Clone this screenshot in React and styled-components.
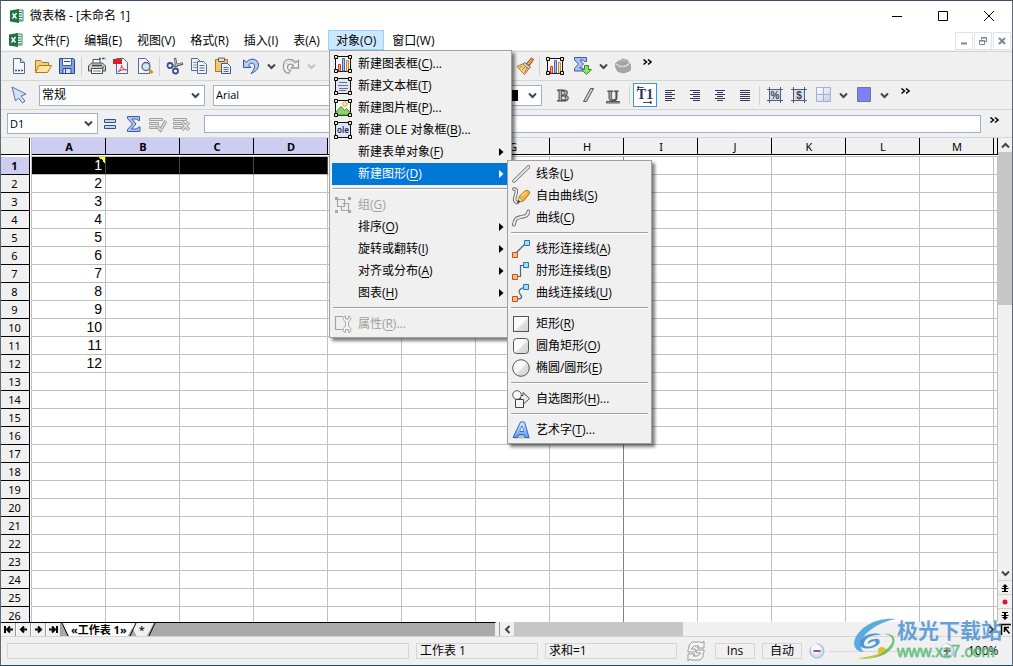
import React from 'react';
import styled, { createGlobalStyle, css } from 'styled-components';

const GlobalStyle = createGlobalStyle`
  *, *::before {
    box-sizing: border-box;
  }
  body {
    margin: 0;
    background: #f0f0f0;
    overflow: hidden;
  }
  button, input, select {
    font: inherit;
    color: inherit;
    margin: 0;
    padding: 0;
    border-radius: 0;
  }
  svg {
    display: block;
    flex: none;
  }
`

const Window = styled.div`
  display: flex;
  flex-direction: column;
  height: 100vh;
  position: relative;
  border: 1px solid #5d6a78;
  border-top-color: #3d4a66;
  border-bottom-color: #1b4f63;
  background: #f0f0f0;
  color: #000;
  font: 12px/16px "Open Sans", "Noto Sans CJK SC", sans-serif;
`

/* title bar and menu bar */

const TitleBar = styled.header`
  display: flex;
  align-items: center;
  height: 29px;
  padding: 0 0 0 8px;
  background: #fff;
`

const Title = styled.h1`
  flex: 1;
  margin: 0 0 0 5px;
  font-size: 12px;
  font-weight: 400;
`

const CaptionButton = styled.button`
  display: flex;
  align-items: center;
  justify-content: center;
  width: 46px;
  height: 28px;
  border: 0;
  background: none;
`

const MenuBar = styled.nav`
  display: flex;
  align-items: center;
  gap: 1px;
  height: 21px;
  padding: 0 1px 0 7px;
  background: #fff;
  border-bottom: 1px solid #f0f0f0;
`

const MenuSlot = styled.div`
  position: relative;
`

const MenuTitle = styled.button`
  height: 20px;
  padding: 1px ${props => props.$open ? '7px' : '6px'} 0;
  border: 1px solid ${props => props.$open ? '#99d1ff' : 'transparent'};
  background: ${props => props.$open ? '#cce8ff' : 'none'};
  line-height: 16px;
  white-space: nowrap;
`

const ChildButtons = styled.div`
  display: flex;
  gap: 1px;
  margin-left: auto;
  padding-top: 2px;
`

const ChildButton = styled.button`
  display: flex;
  align-items: center;
  justify-content: center;
  width: 18px;
  height: 18px;
  border: 1px solid #e3e3e3;
  background: #fff;
`

/* popup menus */

const Popup = styled.ul`
  position: absolute;
  z-index: 10;
  top: ${props => props.$sub ? '-3px' : '100%'};
  left: ${props => props.$sub ? 'calc(100% - 2px)' : '1px'};
  width: ${props => props.$sub ? '145px' : '183px'};
  margin: 0;
  padding: 2px;
  list-style: none;
  border: 1px solid #a0a0a0;
  background: #f0f0f0;
  box-shadow: 3px 3px 3px rgba(0, 0, 0, 0.5);
  color: #000;
`

const Entry = styled.li`
  position: relative;
  height: 22px;
  background: ${props => props.$active ? '#0078d7' : 'none'};
  color: ${props => props.$active ? '#fff' : '#000'};
`

const EntryButton = styled.button`
  display: grid;
  grid-template-columns: 26px 1fr 8px;
  align-items: center;
  width: 100%;
  height: 22px;
  padding: 0 2px 0 0;
  border: 0;
  background: none;
  text-align: left;
  white-space: nowrap;
  &:disabled {
    color: #a0a0a0;
  }
  > svg:first-child {
    margin-left: 2px;
  }
`

const EntryText = styled.span`
  grid-column: 2;
`

const Key = styled.span`
  text-decoration: underline;
  text-underline-offset: 2px;
`

const Divider = styled.li`
  height: 9px;
  padding: 3px 1px 0;
  &::before {
    content: "";
    display: block;
    height: 2px;
    background: #a0a0a0;
    border-bottom: 1px solid #fff;
  }
`

/* toolbars */

const ToolBar = styled.div`
  display: flex;
  align-items: center;
  height: ${props => props.$height || '29px'};
  padding-left: 6px;
  border-top: 1px solid #d5d5d5;
`

const Tool = styled.button`
  display: flex;
  align-items: center;
  justify-content: center;
  flex: none;
  width: ${props => props.$wide ? '25px' : '24px'};
  height: 24px;
  border: 1px solid ${props => props.$on ? '#3c96dc' : 'transparent'};
  background: ${props => props.$on ? '#fff' : 'none'};
`

const DropTool = styled(Tool)`
  width: 16px;
  color: ${props => props.$off ? '#c4c4c4' : '#444'};
`

const ToolLine = styled.span`
  flex: none;
  width: 6px;
  height: 19px;
  background: linear-gradient(#d0d0d0, #d0d0d0) 2px 0 / 1px 100% no-repeat;
`

const Space = styled.span`
  flex: none;
  width: ${props => props.$w};
`

const More = styled.button`
  align-self: flex-start;
  width: 16px;
  height: 20px;
  border: 0;
  background: none;
  display: flex;
  align-items: center;
  justify-content: center;
`

const SelectFrame = styled.label`
  display: grid;
  flex: none;
  align-items: center;
  width: ${props => props.$w};
  height: 21px;
  border: 1px solid #9ab2cf;
  background: #fff;
  color: #444;
  > * {
    grid-area: 1 / 1;
  }
  > svg {
    justify-self: end;
    margin-right: 4px;
    pointer-events: none;
  }
`

const Select = styled.select`
  appearance: none;
  width: 100%;
  height: 19px;
  padding: 0 16px 0 2px;
  border: 0;
  background: transparent;
  color: #000;
  font-size: ${props => props.$small ? '11px' : '12px'};
`

const Swatch = styled.span`
  width: 26px;
  height: 11px;
  margin-left: 4px;
  background: #000;
`

const FormulaInput = styled.input`
  flex: 1;
  min-width: 0;
  height: 18px;
  margin-left: 10px;
  border: 1px solid #9ab2cf;
  background: #fff;
`

/* spreadsheet */

const Sheet = styled.main`
  display: flex;
  flex: 1;
  min-height: 0;
  border-top: 1px solid #d5d5d5;
`

const GridArea = styled.div`
  flex: 1;
  min-width: 0;
  overflow: hidden;
  background: #fff;
`

const Grid = styled.table`
  width: 100%;
  table-layout: fixed;
  border-collapse: separate;
  border-spacing: 0;
`

const headFont = css`
  padding: 0;
  text-align: center;
  font-family: "Noto Sans", "DejaVu Sans", sans-serif;
  font-size: 11px;
  font-weight: ${props => props.$on ? 700 : 400};
  background: ${props => props.$on ? '#cdcdf2' : '#f0f0f0'};
`

const ColHead = styled.th`
  ${headFont}
  height: 19px;
  padding: 0 0 2px;
  line-height: 16px;
  box-shadow: inset 0 -1px #c0c0c0, inset 0 -2px #fff, inset 0 -3px #000, inset -1px 0 #000;
`

const Corner = styled.td`
  height: 19px;
  padding: 0;
  background: #f0f0f0;
  box-shadow: inset -1px 0 #c0c0c0, inset -2px 0 #fff, inset -3px 0 #000, inset 0 -2px #fff, inset 0 -3px #000;
`

const RowHead = styled.th`
  ${headFont}
  height: 18px;
  padding: 1px 4px 1px 0;
  line-height: 16px;
  box-shadow: inset -1px 0 #c0c0c0, inset -2px 0 #fff, inset -3px 0 #000, inset 0 -1px #000;
`

const Cell = styled.td`
  height: 18px;
  padding: 0 3px 0 0;
  text-align: right;
  font: 14px/17px "Liberation Sans", sans-serif;
  color: ${props => props.$selected ? '#fff' : '#000'};
  background: ${props => props.$selected ? '#000' : '#fff'};
  border-right: 1px solid ${props => props.$selected ? '#484848' : props.$pageEdge ? '#808080' : '#c0c0c0'};
  border-bottom: 1px solid #c0c0c0;
  ${props => props.$note && css`
    background: linear-gradient(45deg, transparent 50%, #ff0 50%) top right / 6px 6px no-repeat, #000;
  `}
`

const VScroll = styled.div`
  display: flex;
  flex-direction: column;
  width: 14px;
  background: #f0f0f0;
`

const ScrollButton = styled.button`
  display: flex;
  align-items: center;
  justify-content: center;
  flex: none;
  width: 14px;
  height: 14px;
  border: 0;
  border-top: ${props => props.$line ? '1px solid #d0d0d0' : '0'};
  background: #f0f0f0;
  color: #444;
`

const Track = styled.div`
  display: flex;
  flex-direction: ${props => props.$vertical ? 'column' : 'row'};
  flex: 1;
  background: #f0f0f0;
  &::before {
    content: "";
    flex: 0 0 ${props => props.$thumb};
    background: #c6c6c6;
  }
`

const BottomRow = styled.div`
  display: flex;
  height: 14px;
`

const TabStrip = styled.div`
  display: flex;
  width: 49%;
  border-top: 1px solid #000;
  border-right: 1px solid #f0f0f0;
  background: #aaa;
`

const NavButton = styled.button`
  display: flex;
  align-items: center;
  justify-content: center;
  width: 15px;
  height: 13px;
  border: 0;
  border-right: 1px solid #999;
  border-left: 1px solid #fff;
  background: #f0f0f0;
`

const SheetTab = styled.button`
  height: 13px;
  margin-right: -6px;
  border: 0;
  padding: ${props => props.$current ? '0 8px 0 9px' : '0 9px'};
  clip-path: polygon(0 0, 100% 0, calc(100% - 7px) 100%, 7px 100%);
  background: ${props => props.$current ? '#fff' : '#f0f0f0'};
  font-family: "Noto Sans", "Noto Sans CJK SC", sans-serif;
  font-size: 11px;
  line-height: 12px;
  font-weight: ${props => props.$current ? 700 : 400};
  white-space: nowrap;
`

const Splitter = styled.span`
  width: 4px;
  background: #f0f0f0;
  border-right: 1px solid #999;
`

/* status bar */

const StatusBar = styled.footer`
  display: flex;
  align-items: center;
  height: 29px;
  gap: 7px;
  padding: 0 12px 0 6px;
  border-top: 1px solid #d5d5d5;
`

const StatusField = styled.span`
  flex: ${props => props.$w ? `0 0 ${props.$w}` : '1'};
  height: 16px;
  padding-left: ${props => props.$center ? '0' : '3px'};
  border: 1px solid #d5d5d5;
  line-height: 14px;
  white-space: nowrap;
  text-align: ${props => props.$center ? 'center' : 'left'};
`

const RefreshButton = styled.button`
  width: 24px;
  height: 22px;
  padding: 0 2px;
  border: 0;
  background: none;
`

const Zoom = styled.div`
  display: flex;
  align-items: center;
  width: 191px;
`

const RoundButton = styled.button`
  width: 16px;
  height: 18px;
  border: 0;
  background: none;
`

const ZoomRange = styled.input`
  appearance: none;
  flex: 1;
  min-width: 0;
  height: 16px;
  margin: 0 2px 0 4px;
  background: linear-gradient(#d8d8d8, #d8d8d8) 0 50% / 100% 1px no-repeat;
  &::-webkit-slider-thumb {
    appearance: none;
    width: 8px;
    height: 8px;
    border-radius: 4px;
    background: #e4bd2e;
  }
`

const Percent = styled.output`
  width: 32px;
  margin-left: 13px;
`

const Watermark = styled.aside`
  position: absolute;
  z-index: 5;
  right: 10px;
  bottom: 4px;
  display: flex;
  align-items: center;
  pointer-events: none;
`

const BrandText = styled.div`
  padding-bottom: 1px;
  color: rgba(57, 135, 205, 0.75);
  font: 700 21px/26px "Noto Sans CJK SC", sans-serif;
`

const BrandLink = styled.div`
  color: rgba(84, 184, 115, 0.8);
  font: 400 16px/18px "Liberation Sans", sans-serif;
  -webkit-text-stroke: 1px rgba(84, 184, 115, 0.5);
`

/* icons */

const Svg = ({ size = 18, children }) => (
  <svg width={size} height={size} viewBox="0 0 18 18" fill="none" aria-hidden="true">{children}</svg>
)

const Chevron = ({ turn = 0, size = 9 }) => (
  <svg width={size} height={size} viewBox="0 0 9 9" fill="none" aria-hidden="true">
    <path d="M1 2.5 4.5 6 8 2.5" stroke="currentColor" strokeWidth="2" transform={`rotate(${turn} 4.5 4.5)`} />
  </svg>
)

const DoubleChevron = () => (
  <svg width="9" height="7" viewBox="0 0 9 7" fill="none" aria-hidden="true">
    <path d="M.5.5 3.5 3 .5 5.5M5 .5 8 3 5 5.5" stroke="#000" strokeWidth="1.5" />
  </svg>
)

const Arrow = () => (
  <svg width="5" height="8" viewBox="0 0 5 8" aria-hidden="true"><path d="M0 0v8l4.5-4z" fill="currentColor" /></svg>
)

const SheetLogo = () => (
  <svg width="16" height="16" viewBox="0 0 16 16" aria-hidden="true">
    <path d="M8 2h6v11H8z" fill="#e8f4ec" stroke="#3b8760" />
    <path d="M10 4.5h3M10 7h3M10 9.500h3M10 12h3" stroke="#3b8760" />
    <path d="M1 2.500 10 1v14l-9-1.500z" fill="#217346" />
    <path d="m3.500 5.500 4 5M7.500 5 3.500 10.500" stroke="#fff" strokeWidth="1.400" />
  </svg>
)

const handles = [[0, 0], [14, 0], [0, 14], [14, 14]]

const FrameIcon = ({ children, fill = '#f7f7fb' }) => (
  <Svg>
    <path d="M1.500 1.500h15v15h-15z" fill={fill} stroke="#111" />
    {children}
    {handles.map(([x, y]) => <path key={`${x}-${y}`} d={`M${x + 0.5} ${y + 0.5}h3v3h-3z`} fill="#ffe79a" stroke="#000" />)}
  </Svg>
)

const ChartFrame = () => (
  <FrameIcon>
    <path d="M4.500 9.500h2V16h-2z" fill="#f7a3a3" stroke="#c43c3c" />
    <path d="M8.500 3.500h2V16h-2z" fill="#a9c4f2" stroke="#4667b0" />
    <path d="M12.500 5.500h2V16h-2z" fill="#ffe2a6" stroke="#bd8a35" />
  </FrameIcon>
)

const TextFrame = () => (
  <FrameIcon fill="#dfe6f5">
    <path d="M5 5.500h8M4 8.500h10M5 11.500h9M5 13.500h7" stroke="#66718c" />
  </FrameIcon>
)

const PictureFrame = () => (
  <FrameIcon fill="#f4f8ee">
    <circle cx="11" cy="5" r="2.200" fill="#fff1a8" stroke="#e4a032" />
    <path d="m2 13 5-5.500 3.500 4 2-2 3.500 3.500v3H2z" fill="#8fd06b" stroke="#3e8b2c" />
  </FrameIcon>
)

const OleFrame = () => (
  <FrameIcon fill="#dbe3f5">
    <text x="9" y="12" textAnchor="middle" fontSize="8" fontWeight="600" fontFamily="Noto Sans, sans-serif" fill="#1d2c50">ole</text>
  </FrameIcon>
)

const GroupIcon = () => (
  <Svg>
    <path d="M3.500 3.500h7v7h-7zM8.500 7.500h6v7h-7v-4" stroke="#a5a5a5" strokeWidth="1.200" />
    <path d="M1 1h3v3H1zM14 1h3v3h-3zM1 14h3v3H1zM14 14h3v3h-3z" fill="#a5a5a5" />
  </Svg>
)

const PropertyIcon = () => (
  <Svg>
    <path d="M9 1.500H1.500v13H9" stroke="#a5a5a5" strokeWidth="1.200" />
    <path
      d="M10 1.500c-1.500 2-1 4 1.500 5v5c-2.500 1-3 3.500-1.500 5.500l1.500.500v-3h3v3l1.500-.500c1.500-2 1-4.500-1.500-5.500v-5c2.500-1 3-3 1.500-5l-1.500-.500v3h-3V1z"
      fill="#f6f6f6"
      stroke="#a5a5a5"
    />
  </Svg>
)

const LineIcon = () => (
  <Svg>
    <path d="M2 16 16.500 2" stroke="#777" strokeWidth="3.600" strokeLinecap="round" />
    <path d="M2 16 16.500 2" stroke="#e8e8e8" strokeWidth="1.800" strokeLinecap="round" />
  </Svg>
)

const FreehandIcon = () => (
  <Svg>
    <path d="M1.800 2c4 0 2.500 4 1.500 7s-1.500 5.500 2 6.500" stroke="#666" strokeWidth="3.400" strokeLinecap="round" />
    <path d="M1.800 2c4 0 2.500 4 1.500 7s-1.500 5.500 2 6.500" stroke="#f2f2f2" strokeWidth="1.600" strokeLinecap="round" />
    <path d="m6 15.500 2-7L13.500 3.500q4-1 4 3L12 13.500z" fill="#f5b83c" stroke="#a86c10" />
    <path d="m9 9 5-4" stroke="#ffe08c" strokeWidth="1.500" />
    <path d="m5.500 16 1.500-6 4 3.500z" fill="#f6ddb0" stroke="#a86c10" strokeWidth=".6" />
    <path d="m5.500 16 .800-3 2 1.500z" fill="#3d2d14" />
  </Svg>
)

const CurveIcon = () => (
  <Svg>
    <path d="M2 15.500C3 9 5 9 9 8s6 0 7.500-5.500" stroke="#666" strokeWidth="3.800" strokeLinecap="round" />
    <path d="M2 15.500C3 9 5 9 9 8s6 0 7.500-5.500" stroke="#eee" strokeWidth="2" strokeLinecap="round" />
  </Svg>
)

const connectorPaths = {
  line: 'm4 13 10-10',
  elbow: 'M4 14.500h4.500V3.500H14',
  curve: 'M5 15c6 0 5-3 3-5s-1-6 5-6.500',
}

const Connector = ({ kind }) => (
  <Svg>
    <path d={connectorPaths[kind]} stroke="#4d6680" strokeWidth="1.200" />
    <path d="M.500 12.500h5v5h-5z" fill="#ffb98a" stroke="#c5521b" />
    <path d={kind === 'line' ? 'M12.500.500h5v5h-5z' : 'M11.500.500h5v5h-5z'} fill="#a5dcf7" stroke="#2476ad" />
  </Svg>
)

const ShapeIcon = ({ r }) => (
  <Svg>
    <defs>
      <linearGradient id="shapeFill" x1="0" y1="0" x2="1" y2="1">
        <stop offset=".5" stopColor="#fafafa" />
        <stop offset=".55" stopColor="#e2e2e2" />
        <stop offset="1" stopColor="#cfcfcf" />
      </linearGradient>
    </defs>
    {r === 9
      ? <circle cx="9" cy="9" r="8.300" fill="url(#shapeFill)" stroke="#555" />
      : <rect x="1.500" y="1.500" width="15" height="15" rx={r} fill="url(#shapeFill)" stroke="#555" />}
  </Svg>
)

const AutoShapeIcon = () => (
  <Svg>
    <path d="M8.500 5.500h2.500V2.500l6.500 6-6.500 6v-3h-2.500z" fill="#e8e8e8" stroke="#444" />
    <circle cx="5" cy="5" r="4.300" fill="#fafafa" stroke="#555" />
    <path d="M3.500 9.500h8v8h-8z" fill="#f5f5f5" stroke="#444" />
  </Svg>
)

const ArtIcon = () => (
  <Svg>
    <defs>
      <linearGradient id="artFill" x1="0" y1="0" x2="0" y2="1">
        <stop offset="0" stopColor="#d5ecff" />
        <stop offset="1" stopColor="#5a9af0" />
      </linearGradient>
    </defs>
    <path d="M3 17.500h15L13 3z" fill="#999" opacity=".6" />
    <path
      d="M8.500 1h4l4.500 15.500h-4l-.800-3H7l-1.500 3H1zM10 5l-2 5.500h3.500z"
      fillRule="evenodd"
      fill="url(#artFill)"
      stroke="#3a68b8"
      strokeLinejoin="round"
    />
    <path d="m10 5.500-1.800 4.500h3z" fill="#f0f0f0" />
  </Svg>
)

const NewIcon = () => (
  <Svg>
    <path d="M3.500 1.500h7l4 4v11h-11z" fill="#f4f7fd" stroke="#53698f" />
    <path d="M10.500 1.500v4h4" fill="#cfdaf0" stroke="#53698f" />
    <path d="M5 13.500h2M8 13.500h2M11 13.500h2" stroke="#35507d" strokeWidth="1.500" />
  </Svg>
)

const OpenIcon = () => (
  <Svg>
    <path d="M1.500 14.500v-11h5l2 2h6v3" fill="#f3cf73" stroke="#a87a1e" />
    <path d="m1.500 15.500 3.500-7h12.500l-4 7z" fill="#ffe7a3" stroke="#a87a1e" />
  </Svg>
)

const SaveIcon = () => (
  <Svg>
    <path d="M1.500 1.500h14l1 1v14h-15z" fill="#7fa3e6" stroke="#28498f" />
    <path d="M4.500 1.500h9v7h-9z" fill="#f4f7fd" stroke="#3a5ea8" />
    <path d="M5 11.500h8v5H5z" fill="#dce6f8" stroke="#28498f" />
    <path d="M7.500 12v4M6 4.500h6" stroke="#28498f" />
  </Svg>
)

const PrintIcon = () => (
  <Svg>
    <path d="M5 6V2.500h7V6" fill="#fff" stroke="#555" />
    <path d="m.500 9 3-3h11l3 3v5H.500z" fill="#c9ccd2" stroke="#4b4b4b" />
    <path d="M4 8.500h10" stroke="#444" strokeWidth="1.500" />
    <path d="M3.500 11.500h11v5h-11z" fill="#fff" stroke="#4b4b4b" />
    <path d="M5 14h8" stroke="#777" />
    <path d="M14 10.500h2" stroke="#2ca02c" strokeWidth="2" />
    <path d="M11 1.500h2M14 1.500h2M16.500 1.500h1" stroke="#3d4e7d" strokeWidth="1.500" />
  </Svg>
)

const PdfIcon = () => (
  <Svg>
    <path d="M4.500 1.500h7l4 4v11h-11z" fill="#eef2fa" stroke="#53698f" />
    <path d="M1 2h9v5H1z" fill="#df2020" />
    <path d="M6 15c2-2 4-5 3.500-7 0 3 3 5 5 5-3-1-6 0-8.500 2z" fill="#fff" stroke="#d93232" />
  </Svg>
)

const PreviewIcon = () => (
  <Svg>
    <path d="M2.500 1.500h7l4 4v11h-11z" fill="#f4f7fd" stroke="#53698f" />
    <circle cx="10" cy="9.500" r="4" fill="#cfe6f6" stroke="#55657d" strokeWidth="1.300" />
    <path d="m13 12.500 3.500 3.500" stroke="#d8901d" strokeWidth="2.600" />
  </Svg>
)

const CutIcon = () => (
  <Svg>
    <path d="m9 1 1.500 9M17 6.500 7.500 9" stroke="#555" strokeWidth="2.400" />
    <path d="m9 2 1.500 7M16 6.500 8 8.500" stroke="#e0e0e0" strokeWidth=".8" />
    <circle cx="4" cy="8.500" r="2.500" fill="#fff" stroke="#35508c" strokeWidth="1.800" />
    <circle cx="9.500" cy="14" r="2.500" fill="#fff" stroke="#35508c" strokeWidth="1.800" />
  </Svg>
)

const CopyIcon = () => (
  <Svg>
    <path d="M1.500 1.500h6l3 3v9h-9z" fill="#f0f4fc" stroke="#53698f" />
    <path d="M3 5.500h4M3 8h4M3 10.500h4" stroke="#7f93bb" />
    <path d="M7.500 4.500h6l3 3v9h-9z" fill="#f0f4fc" stroke="#53698f" />
    <path d="M9.500 8.500h5M9.500 11h5M9.500 13.500h5" stroke="#53698f" />
  </Svg>
)

const PasteIcon = () => (
  <Svg>
    <path d="M1.500 2.500h12v12h-12z" fill="#f3c867" stroke="#a97a22" />
    <path d="M4.500 1h6v3.500h-6z" fill="#d9dde4" stroke="#666" />
    <path d="M7.500 6.500h6l3 3v7h-9z" fill="#f0f4fc" stroke="#42598b" />
    <path d="M9.500 10.500h5M9.500 12.500h5M9.500 14.500h5" stroke="#53698f" />
  </Svg>
)

const UndoIcon = () => (
  <Svg>
    <path
      d="M1.500 3v7.500H9L6.500 8c3-3 6.500-2 6 2-.200 2-1.500 4-3.500 6.500 4-1.500 7.500-4.500 7.500-8.500 0-6-7.500-8-12-3z"
      fill="#b5ccf5"
      stroke="#34579c"
    />
  </Svg>
)

const RedoIcon = () => (
  <Svg>
    <path
      d="M16.500 3.500v7.500h-7l2-2.500c-2-2.500-6-1.500-6 1.500 0 2 1.500 3.500 3 3.500l-2 3C3 15.500 1 12.500 1.500 8c1-6.500 8.500-7.500 12-2.500z"
      fill="#f4f4f4"
      stroke="#999"
      strokeWidth="1.300"
    />
    <path d="M4 7.500c1-4 6-4.500 9-.500" stroke="#b5b5b5" strokeDasharray="2 1" />
  </Svg>
)

const LockIcon = () => (
  <Svg><path d="M5 8V6a4 4 0 0 1 8 0v2M3.500 8.500h11v7h-11z" fill="#ddd" stroke="#777" /></Svg>
)

const BrushIcon = () => (
  <Svg>
    <path d="m10.500 6.500 5-5.500 2 1.500-4 6z" fill="#e8a957" stroke="#75471b" />
    <path d="m8.500 5.500 6 4.500-2 2-6-4.500z" fill="#d5d5d5" stroke="#666" />
    <path d="M6.500 7 1 9.500l7.500 8 4-5.500z" fill="#ffdc8f" stroke="#a66e20" />
    <path d="m3.500 10.500 3-1M6 13l3-3M8.500 15.500l2-4" stroke="#a66e20" />
  </Svg>
)

const SigmaIcon = ({ plus }) => (
  <Svg>
    <path
      d={plus ? 'M.500.500h12v4h-2l-1-1.500H6l3.500 4-4 4H9v3H.500v-2.500l4-4.500-4-4z' : 'M2.500 1.500h12v4H13l-1-1.500H7l4 5-4.500 5H12l1.500-2H15v4.500H2.500v-2l5-5.500-5-5.500z'}
      fill="#a9c2f2"
      stroke="#3d5ba3"
    />
    {plus && <path d="M10.500 8.500h4v4h3l-5 5-5-5h3z" fill="#8be06a" stroke="#3b8a2a" />}
  </Svg>
)

const CubeIcon = () => (
  <Svg>
    <path d="M1 6.500 4 4l5-2.500L14 3l1 3 2 1v6c-4 4-11 4-14 1l-2-4z" fill="#a3a3a3" />
    <path d="M2 7c4 3.500 10 3.500 13-.500" stroke="#dadada" strokeWidth="1.300" />
    <path d="m5 5 4-2 4 1.500" stroke="#bdbdbd" />
  </Svg>
)

const PointerIcon = () => (
  <Svg><path d="m2 1 3.500 14 3-3 4 5 2.500-2-4-5 5-2z" fill="#d5e0f6" stroke="#5a70a0" /></Svg>
)

const LetterIcon = ({ letter }) => (
  <Svg>
    {letter === 'I'
      ? <path d="M11.500 2.500h3L7.500 15.500h-3z" fill="#ccc" stroke="#555" />
      : (
        <text x="9" y="15" textAnchor="middle" fontSize={letter === 'U' ? 15 : 17} fontWeight="700" fontFamily="Liberation Serif, serif" fill="#bbb" stroke="#505050">
          {letter}
        </text>
      )}
    {letter === 'U' && <path d="M2.500 15.500h13v1.500h-13z" fill="#bbb" stroke="#555" />}
  </Svg>
)

const TextDirection = () => (
  <Svg>
    <text x="9" y="13" textAnchor="middle" fontSize="14" fontWeight="700" fontFamily="Liberation Serif, serif" fill="#2e3260">T1</text>
    <path d="M1.500 1.500h6M3 0 1 1.500l2 1.500M7 16.500h8M14 15l2 1.500-2 1.500" stroke="#3b4070" />
  </Svg>
)

const alignRows = {
  left: [10, 7, 10, 7, 10, 7],
  right: [10, 7, 10, 7, 10, 7],
  center: [10, 6, 10, 6, 10, 6],
  justify: [10, 10, 10, 10, 10, 10],
}

const AlignIcon = ({ kind }) => (
  <Svg>
    {alignRows[kind].map((w, i) => {
      const x = kind === 'right' ? 14 - w : kind === 'center' ? 9 - w / 2 : 4
      return <path key={i} d={`M${x} ${4.5 + i * 2}h${w}`} stroke="#35355e" />
    })}
  </Svg>
)

const NumberIcon = ({ sign }) => (
  <Svg>
    <path d="M4 4h10v10H4z" fill="#d5def2" />
    <path d="M1 3.500h16M1 14.500h16M3.500 1v16M14.500 1v16" stroke="#4e5c7d" />
    <text x="9" y="13" textAnchor="middle" fontSize="10" fontWeight="700" fontFamily="Liberation Sans, sans-serif" fill="#444">{sign}</text>
  </Svg>
)

const BorderIcon = () => (
  <Svg>
    <defs>
      <linearGradient id="borderFill" x1="0" y1="0" x2="1" y2="1">
        <stop offset="0" stopColor="#fff" />
        <stop offset="1" stopColor="#c3cde6" />
      </linearGradient>
    </defs>
    <path d="M2.500 1.500h14v14h-14z" fill="url(#borderFill)" stroke="#a3afd0" />
    <path d="M9.500 2v13M3 8.500h13" stroke="#a3afd0" />
  </Svg>
)

const FillIcon = () => <Svg><path d="M2.500 1.500h13v14h-13z" fill="#8080ff" stroke="#777" /></Svg>

const EqualIcon = () => (
  <Svg><path d="M3.500 4.500h11v3h-11zM3.500 10.500h11v3h-11z" fill="#c6d4ef" stroke="#34508f" /></Svg>
)

const AcceptIcon = ({ cancel }) => (
  <Svg>
    <path d="M.500 3.500h13v2H.500zM.500 7.500h9v2h-9zM.500 11.500h8v2h-8z" fill="#e8e8e8" stroke="#a0a0a0" />
    {cancel
      ? <path d="m9 7 7 8M16 7l-7 8" stroke="#999" strokeWidth="3.400" />
      : <path d="m8 11 3.500 4L17 6" stroke="#999" strokeWidth="3.400" />}
    {cancel
      ? <path d="m9 7 7 8M16 7l-7 8" stroke="#e4e4e4" strokeWidth="1.300" />
      : <path d="m8 11 3.500 4L17 6" stroke="#e4e4e4" strokeWidth="1.300" />}
  </Svg>
)

const navPaths = [
  'M2 2v7M10 5.500H4M7 2.500l-3 3 3 3',
  'M9 5.500H3M6 2.500l-3 3 3 3',
  'M2 5.500h6M5 2.500l3 3-3 3',
  'M9 2v7M1 5.500h6M4 2.500l3 3-3 3',
]

const NavIcon = ({ d }) => (
  <svg width="11" height="11" viewBox="0 0 11 11" fill="none" aria-hidden="true"><path d={d} stroke="#000" strokeWidth="2" /></svg>
)

const TabEdge = styled.svg`
  position: relative;
  z-index: 1;
  margin: 0 -7px 0 0;
`

const Slant = ({ back }) => (
  <TabEdge width="8" height="13" viewBox="0 0 8 13" fill="none" aria-hidden="true">
    <path d={back ? 'M7 0 1 13' : 'M1 0l6 13'} stroke="#000" />
  </TabEdge>
)

const PageJump = ({ down }) => (
  <svg width="8" height="8" viewBox="0 0 8 8" aria-hidden="true">
    <path d="m4 0 3 3H5v1h2.500v1H5v2h2v1H1V7h2V5H.500V4H3V3H1z" fill="#000" transform={down ? 'rotate(180 4 4)' : undefined} />
  </svg>
)

const SyncIcon = () => (
  <svg width="20" height="20" viewBox="0 0 20 20" aria-hidden="true">
    <path d="M3 7V4l3-3h9l1 1 2-2v7h-7l2-2H8L5 8h4l1 2-2 1H2V9zM17 13v3l-3 3H5l-1-1-2 2v-7h7l-2 2h5l3-3h-4l-1-2 2-1h6v2z" fill="#f6f6f6" stroke="#9a9a9a" />
  </svg>
)

const RoundIcon = ({ plus }) => (
  <svg width="16" height="16" viewBox="0 0 16 16" fill="none" aria-hidden="true">
    <circle cx="8" cy="8" r="7" fill="#cfe2f3" stroke="#93b3cf" />
    <circle cx="7" cy="6" r="5" fill="#f3f9fe" />
    <path d={plus ? 'M4.500 8h7M8 4.500v7' : 'M4.500 8h7'} stroke="#8b1c2c" strokeWidth="1.500" />
  </svg>
)

const BrandMark = () => (
  <svg width="44" height="42" viewBox="0 0 44 42" aria-hidden="true">
    <path d="M43 1C25-1 7 8 2 21c-3 8 2 13 9 13-6-5-3-14 4-20C22 8 31 3 43 1z" fill="#4aa3dd" opacity=".9" />
    <path d="M31 16c9 1 11 7 5 13C29 36 18 39 6 40c16 2 31-3 35-14 2-7-2-11-10-10z" fill="#63bd68" opacity=".9" />
    <path d="M29 17c-9-4-22 1-22 9 0 6 13 6 19 0 2-3 0-6-4-5-5 0-8 3-7 5 3-3 8-4 8-1-2 4-12 5-12 1 0-6 9-10 18-9z" fill="#3f8ed0" opacity=".9" />
    <path d="M3 41c14-1 26-5 31-12-4 9-18 13-31 12z" fill="#efc22e" opacity=".9" />
  </svg>
)

/* data */

const objectMenu = [
  { text: '新建图表框', k: 'C', dots: true, icon: <ChartFrame /> },
  { text: '新建文本框', k: 'T', icon: <TextFrame /> },
  { text: '新建图片框', k: 'P', dots: true, icon: <PictureFrame /> },
  { text: '新建 OLE 对象框', k: 'B', dots: true, icon: <OleFrame /> },
  { text: '新建表单对象', k: 'F', arrow: true },
  { text: '新建图形', k: 'D', arrow: true, active: true },
  null,
  { text: '组', k: 'G', disabled: true, icon: <GroupIcon /> },
  { text: '排序', k: 'O', arrow: true },
  { text: '旋转或翻转', k: 'I', arrow: true },
  { text: '对齐或分布', k: 'A', arrow: true },
  { text: '图表', k: 'H', arrow: true },
  null,
  { text: '属性', k: 'R', dots: true, disabled: true, icon: <PropertyIcon /> },
]

const shapeMenu = [
  { text: '线条', k: 'L', icon: <LineIcon /> },
  { text: '自由曲线', k: 'S', icon: <FreehandIcon /> },
  { text: '曲线', k: 'C', icon: <CurveIcon /> },
  null,
  { text: '线形连接线', k: 'A', icon: <Connector kind="line" /> },
  { text: '肘形连接线', k: 'B', icon: <Connector kind="elbow" /> },
  { text: '曲线连接线', k: 'U', icon: <Connector kind="curve" /> },
  null,
  { text: '矩形', k: 'R', icon: <ShapeIcon r={0} /> },
  { text: '圆角矩形', k: 'O', icon: <ShapeIcon r={3} /> },
  { text: '椭圆/圆形', k: 'E', icon: <ShapeIcon r={9} /> },
  null,
  { text: '自选图形', k: 'H', dots: true, icon: <AutoShapeIcon /> },
  null,
  { text: '艺术字', k: 'T', dots: true, icon: <ArtIcon /> },
]

const menus = ['文件(F)', '编辑(E)', '视图(V)', '格式(R)', '插入(I)', '表(A)', '对象(O)', '窗口(W)']
const columns = 'ABCDEFGHIJKLM'.split('')
const rows = Array.from({ length: 26 }, (_, i) => i + 1)

const Menu = ({ items, sub }) => (
  <Popup $sub={sub}>
    {items.map((item, i) => item === null ? <Divider key={i} /> : (
      <Entry key={i} $active={item.active}>
        <EntryButton disabled={item.disabled}>
          {item.icon}
          <EntryText>{item.text}(<Key>{item.k}</Key>){item.dots && '...'}</EntryText>
          {item.arrow && <Arrow />}
        </EntryButton>
        {item.active && <Menu items={shapeMenu} sub />}
      </Entry>
    ))}
  </Popup>
)

const App = () => (
  <>
    <GlobalStyle />
    <Window>
      <TitleBar>
        <SheetLogo />
        <Title>微表格 - [未命名 1]</Title>
        <CaptionButton><svg width="10" height="10"><path d="M0 5.500h10" stroke="#000" /></svg></CaptionButton>
        <CaptionButton><svg width="10" height="10" fill="none"><path d="M.500.500h9v9h-9z" stroke="#000" /></svg></CaptionButton>
        <CaptionButton><svg width="10" height="10"><path d="m0 0 10 10M10 0 0 10" stroke="#000" /></svg></CaptionButton>
      </TitleBar>

      <MenuBar>
        <SheetLogo />
        {menus.map(name => (
          <MenuSlot key={name}>
            <MenuTitle $open={name === '对象(O)'}>{name}</MenuTitle>
            {name === '对象(O)' && <Menu items={objectMenu} />}
          </MenuSlot>
        ))}
        <ChildButtons>
          <ChildButton><svg width="10" height="10"><path d="M2 7.500h6" stroke="#76869b" strokeWidth="2" /></svg></ChildButton>
          <ChildButton><svg width="10" height="10" fill="none"><path d="M3.500 3.500v-2h5v4h-2M1.500 4.500h5v4h-5zM3 2h6M1 5h6" stroke="#76869b" /></svg></ChildButton>
          <ChildButton><svg width="10" height="10"><path d="m2 2 6 6M8 2 2 8" stroke="#76869b" strokeWidth="2" /></svg></ChildButton>
        </ChildButtons>
      </MenuBar>

      <ToolBar>
        <Tool><NewIcon /></Tool>
        <Tool><OpenIcon /></Tool>
        <Tool><SaveIcon /></Tool>
        <ToolLine />
        <Tool><PrintIcon /></Tool>
        <Tool><PdfIcon /></Tool>
        <Tool><PreviewIcon /></Tool>
        <ToolLine />
        <Tool><CutIcon /></Tool>
        <Tool><CopyIcon /></Tool>
        <Tool><PasteIcon /></Tool>
        <Space $w="4px" />
        <Tool><UndoIcon /></Tool>
        <DropTool><Chevron /></DropTool>
        <Tool><RedoIcon /></Tool>
        <DropTool $off><Chevron /></DropTool>
        <Space $w="4px" />
        <Tool><LockIcon /></Tool>
        <Space $w="166px" />
        <Tool><BrushIcon /></Tool>
        <ToolLine />
        <Tool><ChartFrame /></Tool>
        <Space $w="4px" />
        <Tool><SigmaIcon plus /></Tool>
        <DropTool><Chevron /></DropTool>
        <Tool><CubeIcon /></Tool>
        <Space $w="4px" />
        <More><DoubleChevron /></More>
      </ToolBar>

      <ToolBar>
        <Tool><PointerIcon /></Tool>
        <Space $w="8px" />
        <SelectFrame $w="166px">
          <Select aria-label="样式"><option>常规</option></Select>
          <Chevron />
        </SelectFrame>
        <Space $w="8px" />
        <SelectFrame $w="206px">
          <Select $small aria-label="字体"><option>Arial</option></Select>
          <Chevron />
        </SelectFrame>
        <Space $w="68px" />
        <SelectFrame $w="55px">
          <Swatch />
          <Select aria-label="颜色"><option></option></Select>
          <Chevron />
        </SelectFrame>
        <Space $w="8px" />
        <Tool $wide><LetterIcon letter="B" /></Tool>
        <Tool $wide><LetterIcon letter="I" /></Tool>
        <Tool $wide><LetterIcon letter="U" /></Tool>
        <Space $w="2px" />
        <ToolLine />
        <Tool $on><TextDirection /></Tool>
        <Tool $wide><AlignIcon kind="left" /></Tool>
        <Tool $wide><AlignIcon kind="right" /></Tool>
        <Tool $wide><AlignIcon kind="center" /></Tool>
        <Tool $wide><AlignIcon kind="justify" /></Tool>
        <ToolLine />
        <Tool><NumberIcon sign="%" /></Tool>
        <Tool><NumberIcon sign="$" /></Tool>
        <Tool><BorderIcon /></Tool>
        <DropTool><Chevron /></DropTool>
        <Tool $wide><FillIcon /></Tool>
        <DropTool><Chevron /></DropTool>
        <Space $w="5px" />
        <More><DoubleChevron /></More>
      </ToolBar>

      <ToolBar $height="28px">
        <SelectFrame $w="91px">
          <Select $small aria-label="单元格"><option>D1</option></Select>
          <Chevron />
        </SelectFrame>
        <Tool><EqualIcon /></Tool>
        <Tool><SigmaIcon /></Tool>
        <Tool><AcceptIcon /></Tool>
        <Tool><AcceptIcon cancel /></Tool>
        <FormulaInput aria-label="公式" />
        <Space $w="5px" />
        <More><DoubleChevron /></More>
        <Space $w="10px" />
      </ToolBar>

      <Sheet>
        <GridArea>
          <Grid>
            <colgroup>
              <col width="31" />
              {columns.map(c => <col key={c} width="74" />)}
              <col />
            </colgroup>
            <thead>
              <tr>
                <Corner />
                {columns.map((c, i) => <ColHead key={c} scope="col" $on={i < 4}>{c}</ColHead>)}
                <ColHead as="td" />
              </tr>
            </thead>
            <tbody>
              {rows.map(n => (
                <tr key={n}>
                  <RowHead scope="row" $on={n === 1}>{n}</RowHead>
                  {columns.map((c, i) => (
                    <Cell key={c} $selected={n === 1 && i < 4} $pageEdge={c === 'H'} $note={n === 1 && i === 0}>
                      {i === 0 && n <= 12 ? n : null}
                    </Cell>
                  ))}
                  <Cell />
                </tr>
              ))}
            </tbody>
          </Grid>
        </GridArea>
        <VScroll>
          <ScrollButton><Chevron turn={180} /></ScrollButton>
          <Track $vertical $thumb="37%" />
          <ScrollButton><Chevron /></ScrollButton>
          <ScrollButton $line><PageJump /></ScrollButton>
          <ScrollButton $line>
            <svg width="6" height="6" aria-hidden="true"><circle cx="3" cy="3" r="2.500" fill="#e0103c" /></svg>
          </ScrollButton>
          <ScrollButton $line><PageJump down /></ScrollButton>
        </VScroll>
      </Sheet>

      <BottomRow>
        <TabStrip>
          {navPaths.map(d => <NavButton key={d}><NavIcon d={d} /></NavButton>)}
          <Slant />
          <SheetTab $current>«工作表 1»</SheetTab>
          <Slant back />
          <SheetTab>*</SheetTab>
          <Slant back />
        </TabStrip>
        <Splitter />
        <ScrollButton><Chevron turn={90} /></ScrollButton>
        <Track $thumb="36%" />
        <ScrollButton><Chevron turn={-90} /></ScrollButton>
        <ScrollButton>
          <svg width="12" height="12" viewBox="0 0 12 12" fill="none" aria-hidden="true">
            <path d="M0 1.500h12M2.500 2v10M5 4.500h5M5.500 4v5M5.500 4.500l5 6" stroke="#000" strokeWidth="1.500" />
          </svg>
        </ScrollButton>
      </BottomRow>

      <StatusBar>
        <StatusField />
        <StatusField $w="122px">工作表 1</StatusField>
        <StatusField $w="132px">求和=1</StatusField>
        <RefreshButton><SyncIcon /></RefreshButton>
        <StatusField $w="40px" $center>Ins</StatusField>
        <StatusField $w="40px" $center>自动</StatusField>
        <Zoom>
          <RoundButton><RoundIcon /></RoundButton>
          <ZoomRange type="range" min="0" max="100" defaultValue="49" aria-label="缩放" />
          <RoundButton><RoundIcon plus /></RoundButton>
          <Percent>100%</Percent>
        </Zoom>
      </StatusBar>

      <Watermark>
        <BrandMark />
        <div>
          <BrandText>极光下载站</BrandText>
          <BrandLink>www.xz7.com</BrandLink>
        </div>
      </Watermark>
    </Window>
  </>
)

export default App;
